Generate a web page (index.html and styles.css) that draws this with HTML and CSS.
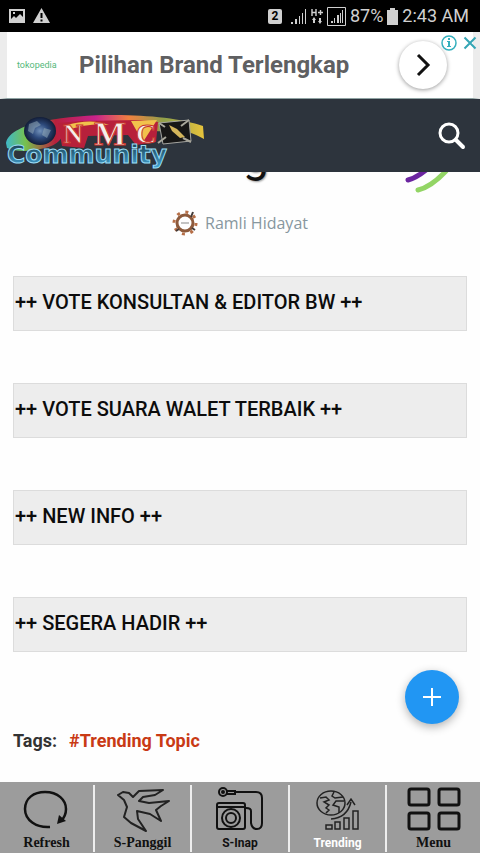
FILE: index.html
```html
<!DOCTYPE html>
<html lang="id">
<head>
    <meta charset="UTF-8">
    <meta name="viewport" content="width=device-width, initial-scale=1.0">
    <title>NMC Community</title>
    <link rel="stylesheet" href="styles.css">
</head>
<body>

    <!-- Status Bar -->
    <div class="status-bar">
        <div class="status-group">
            <svg width="16" height="16" viewBox="0 0 16 16"><path fill="#d0d0d0" fill-rule="evenodd" d="M0 1h16v14H0zM2 3v8l3-3 2 2 4-4 3 3V3zM4 4h2v2H4z"/></svg>
            <svg width="17" height="16" viewBox="0 0 17 16"><path fill="#d0d0d0" fill-rule="evenodd" d="M8.500 0L17 15H0zM7.500 5v5h2V5zM7.500 11.500v2h2v-2z"/></svg>
        </div>
        <div class="status-group status-right">
            <span class="sim">2</span>
            <svg width="17" height="17" viewBox="0 0 17 17" fill="#d0d0d0"><path d="M1 14h2v2H1zM5 11h2v5H5zM9 8h1v8H9zM12 5h1v11h-1zM15 1h1v15h-1z"/></svg>
            <svg width="12" height="17" viewBox="0 0 12 17" fill="none" stroke="#d0d0d0"><path stroke-width="1.400" d="M1 1v7M5 1v7M1 4.500h4M7 4.500h5M9.500 2v5"/><path fill="#d0d0d0" stroke="none" d="M1 12h4l-2-3zM2 12h2v3H2zM7 13h4l-2 3zM8 10h2v3H8z"/></svg>
            <svg width="19" height="19" viewBox="0 0 19 19"><path fill="none" stroke="#d0d0d0" d="M.5.5h18v18H.5z"/><path fill="#d0d0d0" d="M4 14h2v2H4zM7 11h1v5H7zM10 8h2v8h-2zM13 6h1v10h-1zM15 3h1v13h-1z"/></svg>
            <span class="status-text">87%</span>
            <svg width="11" height="17" viewBox="0 0 11 17"><path fill="#d0d0d0" d="M3 0h5v2h3v15H0V2h3z"/></svg>
            <span class="status-text">2:43 AM</span>
        </div>
    </div>

    <!-- Ad Banner -->
    <div class="ad">
        <span class="ad-brand">tokopedia</span>
        <span class="ad-title">Pilihan Brand Terlengkap</span>
        <button class="ad-next" aria-label="Buka">
            <svg width="16" height="24" viewBox="0 0 16 24"><path fill="none" stroke="#111" stroke-width="3" d="M3 2l10 10L3 22"/></svg>
        </button>
        <div class="ad-choices">
            <svg width="16" height="16" viewBox="0 0 16 16"><circle cx="8" cy="8" r="7" fill="none" stroke="#35b0bd" stroke-width="1.500"/><path fill="#35b0bd" d="M7 3h2v2H7zM6 6h3v5h1v1H6v-1h1V7H6z"/></svg>
            <svg width="14" height="14" viewBox="0 0 14 14"><path stroke="#35a5b5" stroke-width="2" d="M1.500 1.500l11 11M12.500 1.500l-11 11"/></svg>
        </div>
    </div>

    <!-- Site Header -->
    <header class="site-header">
        <svg class="logo" width="200" height="60" viewBox="0 0 200 60">
            <defs>
                <linearGradient id="swoosh">
                    <stop offset="0" stop-color="#3fb8c8"/>
                    <stop offset=".1" stop-color="#76c04d"/>
                    <stop offset=".25" stop-color="#b8203c"/>
                    <stop offset=".45" stop-color="#c8228c"/>
                    <stop offset=".62" stop-color="#f08040"/>
                    <stop offset=".8" stop-color="#8fa04a"/>
                    <stop offset="1" stop-color="#e8c43c"/>
                </linearGradient>
                <linearGradient id="word" x2="0" y2="1">
                    <stop offset="0" stop-color="#16333f"/>
                    <stop offset="1" stop-color="#45a9dc"/>
                </linearGradient>
                <radialGradient id="globe">
                    <stop offset="0" stop-color="#7191ba"/>
                    <stop offset=".5" stop-color="#2d4a7c"/>
                    <stop offset="1" stop-color="#121d38"/>
                </radialGradient>
            </defs>
            <path fill="url(#swoosh)" d="M1 31C3 20 20 13 40 9C90-1 165 2 198 14L199 27C188 21 182 19 176 20L60 16Q58 32 40 36Q16 42 2 36z"/>
            <path fill="#b7203b" d="M53 11l22-2 60-1 18 2-2 20-20 3-8-10-40 1-4 12-22-2z"/>
            <path fill="#f2c14c" d="M62 13q24-7 42 0-20-2-41 5zM126 9l26-1-14 22z"/>
            <ellipse cx="35" cy="19" rx="16" ry="14" fill="url(#globe)"/>
            <path fill="#9eb3bd" opacity=".5" d="M24 12l8-3 4 4-6 3-2 6-5-3zM39 16l7 2-4 8-5-3z"/>
            <text class="logo-letter" x="58" y="31" font-size="28">N</text>
            <text class="logo-letter" x="89" y="33" font-size="34">M</text>
            <text class="logo-letter" x="131" y="31" font-size="28">C</text>
            <path fill="#171717" stroke="#a5a5a0" d="M154 11l30-3 2 21-28 3z"/>
            <path fill="none" stroke="#a8a79c" stroke-width="2" d="M153 31l8-6M184 8l-8 6M154 11l6 4M178 26l8 4"/>
            <path fill="#d3b55b" d="M164 13l8 4 8 8-5 1-8-7z"/>
            <text class="logo-word" x="2" y="51" font-size="25">Community</text>
        </svg>
        <button class="search-btn" aria-label="Cari">
            <svg width="28" height="28" viewBox="0 0 28 28"><circle cx="11" cy="11" r="9" fill="none" stroke="#fff" stroke-width="3"/><path stroke="#fff" stroke-width="4" stroke-linecap="round" d="M18 18l7 7"/></svg>
        </button>
    </header>

    <!-- Post -->
    <main class="post">
        <div class="post-title">
            <h1>g</h1>
            <svg class="stripes" width="44" height="21" viewBox="0 0 44 21" fill="none" stroke-linecap="round" stroke-width="5"><path stroke="#6b25a0" d="M3 8Q11 6 21-2"/><path stroke="#93d565" d="M13 18Q26 15 41-1"/></svg>
        </div>
        <div class="author">
            <svg width="26" height="26" viewBox="0 0 26 26"><circle cx="13" cy="13" r="8" fill="none" stroke="#8d5a3c" stroke-width="3"/><circle cx="13" cy="13" r="11" fill="none" stroke="#b66f48" stroke-width="3" stroke-dasharray="3 5.640"/><path fill="none" stroke="#443b38" stroke-width="2" d="M19 7l2-5M7 19l-3 2M20 18l3 2"/><path stroke="#888" d="M9 13h8"/></svg>
            <span>Ramli Hidayat</span>
        </div>
        <div class="topic-list">
            <button class="topic">++ VOTE KONSULTAN &amp; EDITOR BW ++</button>
            <button class="topic">++ VOTE SUARA WALET TERBAIK ++</button>
            <button class="topic">++ NEW INFO ++</button>
            <button class="topic">++ SEGERA HADIR ++</button>
        </div>
        <div class="tags">
            <span>Tags:</span>
            <a href="#trending">#Trending Topic</a>
        </div>
    </main>

    <!-- Bottom Menu -->
    <nav class="bottom-nav">
        <button class="add-btn" aria-label="Tambah">
            <svg width="20" height="20" viewBox="0 0 20 20"><path stroke="#fff" stroke-width="2" d="M10 1v18M1 10h18"/></svg>
        </button>
        <a class="nav-item" href="#refresh">
            <svg width="50" height="46" viewBox="0 0 50 46"><path fill="none" stroke="#111" stroke-width="2.500" d="M28 41C14 42 3 34 3 23C3 12 12 6 23 6C36 6 44 14 44 23Q44 30 39 35"/><path fill="#111" d="M35 38l2-9 7 6z"/></svg>
            <span>Refresh</span>
        </a>
        <a class="nav-item" href="#panggil">
            <svg width="54" height="46" viewBox="0 0 54 46"><path fill="none" stroke="#222" stroke-width="2" stroke-linejoin="round" d="M2 9l5-3 6 1 4 4 6-6 24-1-8 5-12 2-4 4 10 2 20-2-8 5-5 4 5 11-11-7-13-3 1 8 8 12-15-8-7-6 3-10-3-7z"/></svg>
            <span>S-Panggil</span>
        </a>
        <a class="nav-item nav-sans" href="#inap">
            <svg width="50" height="46" viewBox="0 0 50 46" fill="none" stroke="#111" stroke-width="2"><circle cx="8" cy="6" r="4"/><circle cx="8" cy="6" r="1"/><path d="M12 5h8v3h-8M20 6h21q6 0 6 6v25q0 6-5 6t-6-6V25q0-3-5-3"/><rect x="2" y="17" width="28" height="26" rx="2"/><path d="M2 21h28"/><circle cx="16" cy="32" r="9"/><circle cx="16" cy="32" r="5"/></svg>
            <span>S-Inap</span>
        </a>
        <a class="nav-item nav-sans active" href="#trending">
            <svg width="44" height="46" viewBox="0 0 44 46" fill="none" stroke="#222" stroke-width="1.500"><ellipse cx="15" cy="17" rx="14" ry="12"/><path d="M4 12l6-1 3 3-5 2 5 3-3 3 3 2-3 3M18 6l-2 4 3 2 8-1M28 15h-8l-3 4 6 2v6"/><path d="M15 33Q31 32 35 16M31 19l4-6 4 6M10 39h6v4h-6zM19 36h5v7h-5zM28 32h5v11h-5zM37 25h5v18h-5z"/></svg>
            <span>Trending</span>
        </a>
        <a class="nav-item" href="#menu">
            <svg width="54" height="46" viewBox="0 0 54 46" fill="none" stroke="#111" stroke-width="3"><rect x="2" y="3" width="20" height="16" rx="2"/><rect x="32" y="3" width="20" height="16" rx="2"/><rect x="2" y="27" width="20" height="16" rx="2"/><rect x="32" y="27" width="20" height="16" rx="2"/></svg>
            <span>Menu</span>
        </a>
    </nav>

</body>
</html>
```
FILE: styles.css
```css
/* Global Styles */
* {
    box-sizing: border-box;
}

body {
    margin: 0;
    min-height: 100vh;
    display: flex;
    flex-direction: column;
    background-color: #fefefe;
    font-family: Roboto, "Liberation Sans", sans-serif;
    color: #111;
}

button {
    border: none;
    cursor: pointer;
}

svg {
    display: block;
    flex-shrink: 0;
}

/* Status Bar */
.status-bar {
    display: flex;
    justify-content: space-between;
    align-items: center;
    height: 32px;
    padding: 0 11px 0 9px;
    background-color: #000;
    color: #d0d0d0;
}

.status-group {
    display: flex;
    align-items: center;
    gap: 8px;
}

.status-right {
    gap: 4px;
}

.sim {
    width: 14px;
    margin-right: 4px;
    background-color: #d0d0d0;
    border-radius: 2px;
    color: #000;
    font-size: 12px;
    font-weight: bold;
    line-height: 15px;
    text-align: center;
}

.status-text {
    font-size: 18px;
    line-height: 32px;
}

/* Ad Banner */
.ad {
    position: relative;
    display: flex;
    align-items: center;
    height: 67px;
    padding: 0 26px 0 10px;
    border-left: 7px solid #ececec;
    border-right: 7px solid #ececec;
    border-bottom: 1px solid #8fa3a3;
    background-color: #fff;
}

.ad-brand {
    width: 62px;
    color: #55b87a;
    font-size: 9px;
}

.ad-title {
    flex: 1;
    color: #5f6062;
    font-size: 24px;
    font-weight: bold;
    white-space: nowrap;
}

.ad-next {
    display: flex;
    align-items: center;
    justify-content: center;
    width: 48px;
    height: 48px;
    padding: 0;
    border-radius: 50%;
    background-color: #fff;
    box-shadow: 0 1px 4px rgba(0, 0, 0, 0.4);
}

.ad-choices {
    position: absolute;
    top: 3px;
    right: -4px;
    display: flex;
    align-items: center;
    gap: 6px;
}

/* Site Header */
.site-header {
    display: flex;
    align-items: center;
    justify-content: space-between;
    height: 73px;
    padding: 0 14px 0 5px;
    background-color: #2d343d;
}

.logo {
    align-self: flex-end;
}

.logo-letter {
    fill: #f4f0ea;
    stroke: #c93329;
    stroke-width: 1px;
    font-family: "Liberation Serif", serif;
    font-weight: bold;
}

.logo-word {
    fill: url(#word);
    stroke: #9bdcf5;
    stroke-width: 1px;
    font-family: "DejaVu Sans", sans-serif;
    font-weight: bold;
}

.search-btn {
    padding: 0;
    background: none;
}

/* Post */
.post {
    flex: 1;
    padding: 0 13px;
}

.post-title {
    display: grid;
    grid-template-columns: 1fr auto 1fr;
    height: 21px;
    overflow: hidden;
}

.post-title h1 {
    grid-column: 2;
    height: 60px;
    margin: -46px 0 0;
    padding-left: 32px;
    font-size: 46px;
    font-weight: 400;
    line-height: 60px;
    text-shadow: 1px 1px 2px #999;
}

.stripes {
    justify-self: end;
    margin-right: 18px;
}

.author {
    display: flex;
    align-items: center;
    justify-content: center;
    gap: 7px;
    height: 26px;
    margin: 17px 0 40px;
    color: #87979f;
    font-family: "Open Sans", sans-serif;
    font-size: 16px;
}

.topic-list {
    display: flex;
    flex-direction: column;
    gap: 52px;
}

.topic {
    height: 55px;
    padding: 0 1px 3px;
    border: 1px solid #dcdcdc;
    background-color: #ededed;
    color: #0c0c0c;
    font-family: inherit;
    font-size: 20px;
    font-weight: 500;
    text-align: left;
}

.tags {
    display: flex;
    gap: 12px;
    margin-top: 77px;
    font-size: 18px;
    font-weight: bold;
    line-height: 24px;
    color: #333;
}

.tags a {
    color: #c93a15;
    text-decoration: none;
}

/* Bottom Menu */
.bottom-nav {
    position: sticky;
    bottom: 0;
    display: grid;
    grid-template-columns: 95fr 97fr 98fr 97fr 93fr;
    padding: 3px 0 1px;
    background-color: #9c9c9c;
}

.nav-item {
    display: flex;
    flex-direction: column;
    align-items: center;
    gap: 2px;
    height: 67px;
    padding-top: 1px;
    border-right: 2px solid #eee;
    color: #111;
    font-family: "Liberation Serif", serif;
    font-size: 14px;
    font-weight: bold;
    line-height: 18px;
    text-decoration: none;
}

.nav-item:last-child {
    border-right: none;
}

.nav-sans {
    font-family: Roboto, "Liberation Sans", sans-serif;
    font-size: 12px;
}

.active {
    color: #fff;
}

.add-btn {
    position: absolute;
    right: 21px;
    bottom: 129px;
    display: flex;
    align-items: center;
    justify-content: center;
    width: 54px;
    height: 54px;
    padding: 0;
    border-radius: 50%;
    background-color: #2196f3;
    box-shadow: 0 3px 10px rgba(0, 0, 0, 0.3);
}
```
